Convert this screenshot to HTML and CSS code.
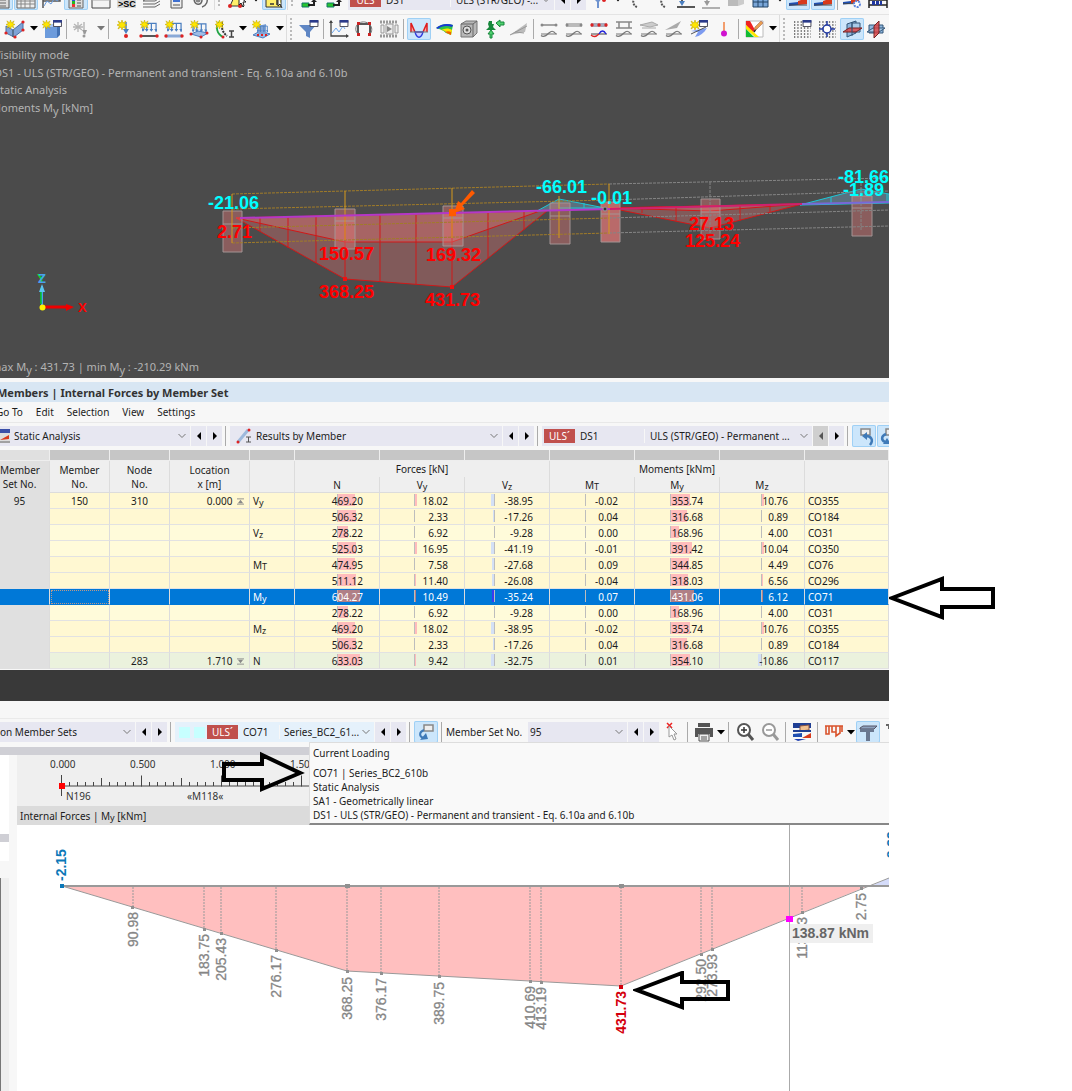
FILE: index.html
```html
<!DOCTYPE html>
<html lang="en">
<head>
<meta charset="utf-8">
<title>Internal Forces by Member Set</title>
<link rel="stylesheet" href="styles.css">
</head>
<body>
<svg class="defs" aria-hidden="true">
  <symbol id="star" viewBox="0 0 10 10"><path d="M5 0 6 3 9 1 7.500 4 10 5 7.500 6 9 9 6 7 5 10 4 7 1 9 2.500 6 0 5 2.500 4 1 1 4 3z" fill="#ffe600" stroke="#c2a800" stroke-width=".6"/></symbol>
  <symbol id="chev" viewBox="0 0 8 6"><path d="M.5 1 4 4.500 7.500 1" fill="none" stroke="#777"/></symbol>
  <symbol id="prev" viewBox="0 0 6 8"><path d="M5 0v8L1 4z"/></symbol>
  <symbol id="next" viewBox="0 0 6 8"><path d="M1 0v8l4-4z"/></symbol>
  <symbol id="down" viewBox="0 0 8 5"><path d="M0 0h8L4 4.500z"/></symbol>
  <symbol id="wave" viewBox="0 0 18 7"><path d="M1 4h16" stroke="#777"/><path d="M1 5.500C4 8 7 5 9 3s4-3 7 1" fill="none" stroke="currentColor" stroke-width="1.200"/></symbol>
  <symbol id="loads" viewBox="0 0 16 12"><path d="M1 9V1h14v9M5 1v8M10 1v8" fill="none" stroke="#4b7fc0" stroke-width="1.300"/><path d="M-1 7h4l-2 3zM3 7h4l-2 3zM8 7h4l-2 3zM13 7h4l-2 3z" fill="#4b7fc0"/></symbol>
  <symbol id="ramp" viewBox="0 0 18 8"><path d="M0 8V5l9-1v3z" fill="#1f4fb0"/><path d="M9 7V3l9-3v6z" fill="#d83a1c"/><path d="M0 7h18" stroke="#444"/></symbol>
  <symbol id="win" viewBox="0 0 10 8"><path d="M.5.5h9v7h-9z" fill="#fff" stroke="#334"/><path d="M0 0h10v3H0z" fill="#2a3a8a"/></symbol>
</svg>

<main class="page">
<section class="app">
  <div class="toolbar cut" role="toolbar" aria-label="Standard">
    <button class="tool on" aria-label="Navigator"><svg viewBox="0 0 24 22"><path d="M4 2h16v18H4z" fill="#ddd" stroke="#555"/><path d="M8 12h9M8 15h9M8 18h9" stroke="#666"/></svg></button>
    <button class="tool on" aria-label="Table"><svg viewBox="0 0 24 22"><path d="M3 2h18v18H3z" fill="#eee" stroke="#666"/><path d="M3 10h18M3 13h18M3 16h18M7 8v12M11 8v12M16 8v12" stroke="#888"/></svg></button>
    <button class="tool" aria-label="Diagram"><svg viewBox="0 0 24 22"><path d="M4 20V10h17v3H4" fill="none" stroke="#555" stroke-width="1.500"/><path d="M5 18l3-5 4 3 3-5 4 2" fill="none" stroke="#6a9de0"/></svg></button>
    <button class="tool on" aria-label="Panel"><svg viewBox="0 0 24 22"><path d="M5 2h14v18H5z" fill="#ddd" stroke="#666"/><path d="M8 10h3v3H8z" fill="#2b4fdc"/><path d="M8 13h3v3H8z" fill="#2b2"/><path d="M8 16h3v3H8z" fill="#e33"/><path d="M13 12h4M13 15h4M13 18h4" stroke="#555"/></svg></button>
    <button class="tool" aria-label="Dialog"><svg viewBox="0 0 24 22"><path d="M3 3h18v17H3z" fill="#f3f3f3" stroke="#444"/><path d="M3 12h18" stroke="#aaa"/></svg></button>
    <button class="tool" aria-label="Script console"><svg viewBox="0 0 24 22"><rect x="3" y="2" width="19" height="18" fill="#d8d8d8"/><text x="4" y="19" class="sc">&gt;SC</text></svg></button>
    <button class="tool" aria-label="Layers"><svg viewBox="0 0 24 22"><path d="M4 13l5-3h12l-5 3zM4 16h12l5-3M4 19h12l5-3" fill="#eee" stroke="#666"/></svg></button>
    <button class="tool" aria-label="Report"><svg viewBox="0 0 24 22"><path d="M7 2h11v18H7z" fill="#eee" stroke="#555"/><path d="M9 11h7v3H9z" fill="#3d6fd0"/><path d="M9 17h7" stroke="#555"/></svg></button>
    <button class="tool" aria-label="Microphone"><svg viewBox="0 0 24 22"><path d="M5 10c0 8 8 8 8 2M10 8v6M17 8c3 5 0 10-4 11" fill="none" stroke="#666" stroke-width="1.500"/><circle cx="9" cy="12" r="2.500" fill="#888"/></svg></button>
    <span class="grip"></span>
    <button class="tool" aria-label="Select"><svg viewBox="0 0 24 22"><path d="M11 5l-6 13h13z" fill="#ffef6a" stroke="#333"/><circle cx="5" cy="18" r="2" fill="#d22"/><circle cx="15" cy="18" r="2" fill="#d22"/><path d="M14 8v9l2-2 2 4 1-1-1-4h3z" fill="#fff" stroke="#222"/></svg></button>
    <button class="drop" aria-label="Select options"><svg><use href="#down"/></svg></button>
    <button class="tool on" aria-label="Numbering"><svg viewBox="0 0 24 22"><path d="M4 3h15v16H4z" fill="#ffef6a" stroke="#333"/><path d="M8 10h4M10 8v4M8 16h4M15 10v7" stroke="#333" stroke-width="1.500"/><path d="M16 8v10l2-2 2 4" fill="#fff" stroke="#222"/></svg></button>
    <span class="grip"></span>
    <button class="tool" aria-label="Load case"><svg viewBox="0 0 24 22"><path d="M4 15h7v4H4z" fill="#28c52e" stroke="#176"/><path d="M10 17h6v-3" fill="none" stroke="#222" stroke-width="2"/><path d="M13 14h6l-3-3z" fill="#222"/><path d="M15 6h6v6h-3z" fill="#f0f"/></svg></button>
    <button class="tool" aria-label="Load combination"><svg viewBox="0 0 24 22"><path d="M4 15h7v4H4z" fill="#28c52e" stroke="#176"/><path d="M10 17h6v-3" fill="none" stroke="#222" stroke-width="2"/><path d="M13 14h6l-3-3z" fill="#222"/><path d="M15 6h6v6h-3z" fill="#f0f"/></svg></button>
    <label class="combo w-top"><b class="badge">ULS</b><span class="code">DS1</span><select aria-label="Design situation"><option>ULS (STR/GEO) -...</option></select><svg class="chev"><use href="#chev"/></svg></label>
    <button class="nav" aria-label="Previous"><svg><use href="#prev"/></svg></button>
    <button class="nav" aria-label="Next"><svg><use href="#next"/></svg></button>
    <button class="tool" aria-label="Filter"><svg viewBox="0 0 24 22"><path d="M5 9h11l-4 5v6h-2v-6z" fill="#6f93cf"/><circle cx="17" cy="12" r="2" fill="#d22"/></svg></button>
    <button class="drop" aria-label="Filter options"><svg><use href="#down"/></svg></button>
    <button class="tool" aria-label="Supports"><svg viewBox="0 0 24 22"><path d="M13 8c-5 3-5 9 0 11" fill="none" stroke="#555" stroke-width="2" stroke-dasharray="2 1"/></svg></button>
    <button class="tool" aria-label="Releases"><svg viewBox="0 0 24 22"><path d="M16 8c-5 3-5 9 0 11" fill="none" stroke="#555" stroke-width="2" stroke-dasharray="2 1"/></svg></button>
    <button class="tool" aria-label="Load values"><svg viewBox="0 0 24 22"><path d="M8 6v8M3 19h18" stroke="#222" stroke-width="1.500"/><path d="M5 13h6l-3 5z" fill="#4b7fc0"/></svg></button>
    <button class="tool" aria-label="Imposed values"><svg viewBox="0 0 24 22"><path d="M8 6v8M3 20h18" stroke="#999" stroke-width="1.500"/><path d="M5 13h6l-3 5z" fill="#999"/></svg></button>
    <button class="tool" aria-label="Solids"><svg viewBox="0 0 24 22"><path d="M4 6h10v12H4z" fill="#bbb"/><path d="M14 6h6v10l-6 2z" fill="#ccc"/></svg></button>
    <button class="tool" aria-label="Mesh"><svg viewBox="0 0 24 22"><path d="M4 3h15v16H4z" fill="#7aa6d8" stroke="#246"/><path d="M4 9h15M4 14h15M9 3v16M14 3v16" stroke="#246"/></svg></button>
    <button class="drop" aria-label="Mesh options"><svg><use href="#down"/></svg></button>
    <button class="tool on" aria-label="Results"><svg viewBox="0 0 24 22"><use href="#ramp" x="3" y="10" width="18" height="8"/></svg></button>
    <button class="tool on" aria-label="Result values"><svg viewBox="0 0 24 22"><use href="#ramp" x="3" y="10" width="18" height="8"/></svg></button>
    <span class="sep"></span>
    <button class="tool" aria-label="Result settings"><svg viewBox="0 0 24 22"><use href="#ramp" x="2" y="9" width="16" height="8"/><circle cx="16" cy="16" r="3" fill="#fff" stroke="#5b83dd" stroke-width="2" stroke-dasharray="2 1"/></svg></button>
    <button class="tool" aria-label="Calculator"><svg viewBox="0 0 24 22"><path d="M3 9v11M21 9v11M3 12h18M3 17h18" stroke="#222" stroke-width="1.500"/><path d="M6 15h10" stroke="#2038a0" stroke-width="4" stroke-dasharray="3 1"/></svg></button>
  </div>

  <div class="toolbar" role="toolbar" aria-label="Results">
    <button class="tool" aria-label="New surface"><svg viewBox="0 0 24 22"><path d="M3 8l7 4 10-8v8l-9 7-8-4z" fill="#7fa3d6" stroke="#4b6fa8"/><path d="M10 12v7" stroke="#345"/><circle cx="3" cy="15" r="1.600" fill="#d22"/><circle cx="12" cy="19" r="1.600" fill="#d22"/><circle cx="20" cy="12" r="1.600" fill="#d22"/><circle cx="20" cy="4" r="1.600" fill="#d22"/><use href="#star" x="3" y="2" width="9" height="9"/></svg></button>
    <button class="drop" aria-label="Surface options"><svg><use href="#down"/></svg></button>
    <button class="tool" aria-label="New solid"><svg viewBox="0 0 24 22"><path d="M5 9l3-3h12l-3 3z" fill="#a9c6ee"/><path d="M5 9h12v11H5z" fill="#6c9bdc"/><path d="M17 9l3-3v11l-3 3z" fill="#4271b4"/><use href="#star" x="2" y="2" width="9" height="9"/><use href="#win" x="13" y="2" width="9" height="7"/></svg></button>
    <span class="sep"></span>
    <button class="tool" aria-label="New nodal load" disabled><svg viewBox="0 0 24 22"><path d="M8 4v10M4 6l8 6M12 6l-8 6M3 9h10" stroke="#b5b5b5" stroke-width="1.300"/><path d="M14 4v12" stroke="#999"/><path d="M12 12h5l-2 5z" fill="#999"/><circle cx="14" cy="18" r="1.500" fill="#999"/></svg></button>
    <button class="drop dim" aria-label="Load options"><svg><use href="#down"/></svg></button>
    <span class="sep"></span>
    <button class="tool" aria-label="Nodal load"><svg viewBox="0 0 24 22"><path d="M14 4v10" stroke="#4b7fc0" stroke-width="1.500"/><path d="M11 11h6l-3 5z" fill="#4b7fc0"/><circle cx="14" cy="18" r="2" fill="#d22"/><use href="#star" x="5" y="2" width="10" height="10"/></svg></button>
    <button class="tool" aria-label="Line load"><svg viewBox="0 0 24 22"><use href="#loads" x="5" y="4" width="15" height="12"/><path d="M4 18h16" stroke="#222" stroke-width="1.500"/><circle cx="4" cy="18" r="1.700" fill="#d22"/><circle cx="20" cy="18" r="1.700" fill="#d22"/><use href="#star" x="3" y="2" width="9" height="9"/></svg></button>
    <button class="tool" aria-label="Member load"><svg viewBox="0 0 24 22"><use href="#loads" x="5" y="4" width="15" height="12"/><path d="M4 18h16" stroke="#8aa9d6" stroke-width="3"/><circle cx="4" cy="18" r="1.700" fill="#d22"/><circle cx="20" cy="18" r="1.700" fill="#d22"/><use href="#star" x="3" y="2" width="9" height="9"/></svg></button>
    <button class="tool" aria-label="Surface load"><svg viewBox="0 0 24 22"><path d="M4 16l7-3 10 2-7 4z" fill="#9dbce6" stroke="#4b7fc0"/><use href="#loads" x="5" y="5" width="15" height="11"/><circle cx="4" cy="16" r="1.500" fill="#d22"/><circle cx="14" cy="19" r="1.500" fill="#d22"/><circle cx="20" cy="15" r="1.500" fill="#d22"/><use href="#star" x="3" y="2" width="9" height="9"/></svg></button>
    <button class="tool" aria-label="Imperfection"><svg viewBox="0 0 24 22"><path d="M7 4c-4 5-2 12 4 15" fill="none" stroke="#22a545" stroke-width="1.800"/><path d="M10 4c-1 6 1 11 5 14" fill="none" stroke="#333" stroke-width="2" stroke-dasharray="2 1"/><path d="M17 13h5M19.500 13v6M17 19h5" stroke="#444" stroke-width="1.500"/><circle cx="11" cy="19" r="1.500" fill="#d22"/><use href="#star" x="3" y="2" width="9" height="9"/></svg></button>
    <button class="drop" aria-label="Imperfection options"><svg><use href="#down"/></svg></button>
    <button class="tool" aria-label="Free load"><svg viewBox="0 0 24 22"><path d="M4 17l7-4 10 3-7 4z" fill="#9dbce6" stroke="#4b7fc0"/><path d="M9 16V8l8-2v10z" fill="#7fa3d6"/><use href="#loads" x="8" y="6" width="11" height="11"/><path d="M8 17h10" stroke="#d22" stroke-width="2" stroke-dasharray="2 2"/><use href="#star" x="3" y="2" width="9" height="9"/></svg></button>
    <button class="drop" aria-label="Free load options"><svg><use href="#down"/></svg></button>
    <span class="grip"></span>
    <button class="tool" aria-label="Result filter"><svg viewBox="0 0 24 22"><path d="M2 7h17l-6 7v6l-4-2v-4z" fill="#5f86c4"/><use href="#win" x="12" y="2" width="10" height="7"/></svg></button>
    <span class="sep"></span>
    <button class="tool" aria-label="Result diagrams"><svg viewBox="0 0 24 22"><path d="M4 3v15h17" fill="none" stroke="#444" stroke-width="1.300"/><path d="M2 5l2-3 2 3zM19 16l3 2-3 2z" fill="#444"/><path d="M5 15l4-5 3 4 4-6 2 3" fill="none" stroke="#6aa5ee"/><use href="#win" x="12" y="2" width="10" height="7"/></svg></button>
    <button class="tool" aria-label="Deformation"><svg viewBox="0 0 24 22"><path d="M6 17V6h12v11" fill="none" stroke="#222" stroke-width="1.500"/><path d="M6 16C2 12 4 7 7 5c4-2 8-1 10 1 4 3 3 8 1 10" fill="none" stroke="#777"/><path d="M5 4h3v3H5zM16 4h3v3h-3zM5 15h3v3H5zM16 15h3v3h-3z" fill="#c22"/></svg></button>
    <button class="tool" aria-label="Animation"><svg viewBox="0 0 24 22"><path d="M3 4h18M3 18h18" stroke="#999" stroke-width="3" stroke-dasharray="2 1"/><path d="M4 7h3v8H4zM9 6h7v10H9zM18 7h3v8h-3z" fill="#eee" stroke="#999"/><path d="M10 8l5 3-5 3z" fill="#888"/></svg></button>
    <span class="sep"></span>
    <button class="tool on" aria-label="Internal forces"><svg viewBox="0 0 24 22"><path d="M4 14V5l4 9M20 14V5l-4 9" fill="#f7aaaa" stroke="#e01c1c" stroke-width="1.500"/><path d="M8 14c2 7 6 7 8 0z" fill="#c8ccff" stroke="#2c38dd" stroke-width="1.300"/><path d="M3 14h18" stroke="#777"/></svg></button>
    <button class="tool" aria-label="Surface results"><svg viewBox="0 0 24 22"><path d="M4 10c5-4 11-5 17-3l-2 10-5-2c-3-3-7-4-10-5z" fill="#2ec24a"/><path d="M4 10c5-4 11-5 17-3l-1 2C15 7 9 8 6 11z" fill="#1836d8"/><path d="M9 12c4-2 8-2 11 0l-1 5-4-2c-2-2-3-3-6-3z" fill="#ffe200"/><path d="M13 14c2-1 4-1 6 0v3z" fill="#f06000"/></svg></button>
    <button class="tool" aria-label="Solid results"><svg viewBox="0 0 24 22"><path d="M4 6l5-3h11v12l-4 4H4z" fill="#b8b8b8" stroke="#777"/><path d="M4 6h12v13M16 6l4-3" fill="none" stroke="#666"/><circle cx="10" cy="12" r="4" fill="#ddd" stroke="#555"/><circle cx="10" cy="12" r="1.500" fill="#555"/></svg></button>
    <button class="tool" aria-label="Reactions"><svg viewBox="0 0 24 22"><path d="M7 3h3v3h2l-1 3 3 3H4l3-3-1-3z" fill="#17883c"/><path d="M14 5l4-3v2h4v3h-4v2zM8 20v-4H6l3-4 3 4h-2v4z" fill="#4fd06e" stroke="#17883c"/></svg></button>
    <button class="tool" aria-label="Sections"><svg viewBox="0 0 24 22"><path d="M3 17L20 5l-2 9z" fill="#bbb"/><path d="M3 17l17-9M8 14l9 1" stroke="#999"/></svg></button>
    <span class="sep"></span>
    <button class="tool" aria-label="Line results"><svg viewBox="0 0 24 22"><path d="M4 7h16" stroke="#888" stroke-width="1.500"/><circle cx="5" cy="7" r="1.500" fill="#888"/><circle cx="19" cy="7" r="1.500" fill="#888"/><use href="#wave" x="3" y="12" width="18" height="7" color="#777"/></svg></button>
    <button class="tool" aria-label="Member results"><svg viewBox="0 0 24 22"><path d="M4 7h16" stroke="#bbb" stroke-width="4"/><circle cx="5" cy="7" r="1.500" fill="#888"/><circle cx="19" cy="7" r="1.500" fill="#888"/><use href="#wave" x="3" y="12" width="18" height="7" color="#777"/></svg></button>
    <button class="tool" aria-label="Member set results"><svg viewBox="0 0 24 22"><path d="M4 7h16" stroke="#aab" stroke-width="4"/><circle cx="5" cy="7" r="1.700" fill="#d22"/><circle cx="12" cy="7" r="1.700" fill="#d22"/><circle cx="19" cy="7" r="1.700" fill="#d22"/><path d="M4 16h16" stroke="#444"/><path d="M4 17c3 3 6 1 8-1" fill="none" stroke="#d22" stroke-width="1.300"/><path d="M12 16c2-4 5-4 7 0" fill="none" stroke="#22d" stroke-width="1.300"/></svg></button>
    <button class="tool" aria-label="Support results"><svg viewBox="0 0 24 22"><path d="M4 4h16M7 4v6h3M17 4v6h-3M4 10h16" stroke="#888" fill="none" stroke-width="1.500"/><use href="#wave" x="3" y="12" width="18" height="7" color="#777"/></svg></button>
    <button class="tool" aria-label="Surface section"><svg viewBox="0 0 24 22"><path d="M3 7l12-3 6 3-8 2zM5 10h14" stroke="#aaa" fill="#ccc"/><use href="#wave" x="3" y="12" width="18" height="7" color="#777"/></svg></button>
    <button class="tool" aria-label="Inclined section"><svg viewBox="0 0 24 22"><path d="M3 12L19 3l-4 7z" fill="#aaa"/><use href="#wave" x="3" y="12" width="18" height="7" color="#777"/></svg></button>
    <button class="tool" aria-label="New result section"><svg viewBox="0 0 24 22"><path d="M4 13l16-3c-3 5-7 8-12 9l3-5z" fill="#7d9bf0"/><path d="M4 16l15-7" stroke="#555"/><use href="#star" x="3" y="2" width="10" height="10"/><use href="#win" x="12" y="2" width="9" height="7"/></svg></button>
    <button class="tool" aria-label="Probe"><svg viewBox="0 0 24 22"><path d="M12 4v12" stroke="#f08040" stroke-width="1.500"/><circle cx="12" cy="15.500" r="3" fill="#d013d0"/></svg></button>
    <span class="sep"></span>
    <button class="tool" aria-label="Colour scale"><svg viewBox="0 0 24 22"><path d="M4 3h17v16H4z" fill="#fff" stroke="#bbb"/><path d="M4 3h4l5 9-3 3-6-8z" fill="#e22"/><path d="M4 7l13 12h-4L4 11z" fill="#ffe600"/><path d="M4 11l8 8H4z" fill="#1b3"/><path d="M12 14l3-5" stroke="#222" stroke-width="1.500"/><path d="M19 3l2 2-6 6-3 1 1-3z" fill="#e9a050" stroke="#a65" stroke-width=".6"/></svg></button>
    <button class="drop" aria-label="Colour options"><svg><use href="#down"/></svg></button>
    <span class="grip"></span>
    <button class="tool" aria-label="Grid settings"><svg viewBox="0 0 24 22"><path d="M4 4h17M4 7h17M4 10h17M4 13h17M4 16h17M4 19h17" stroke="#555" stroke-width="1.300" stroke-dasharray="1.300 2"/><use href="#win" x="12" y="2" width="10" height="7"/></svg></button>
    <button class="tool" aria-label="Snap"><svg viewBox="0 0 24 22"><path d="M4 4h17M4 7h17M4 10h17M4 13h17M4 16h17M4 19h17" stroke="#555" stroke-width="1.300" stroke-dasharray="1.300 2"/><circle cx="12" cy="11" r="4" fill="#fff" stroke="#2038a0" stroke-width="1.500"/><path d="M12 3v4M12 15v4M4 11h4M16 11h4" stroke="#2038a0" stroke-width="1.500"/></svg></button>
    <button class="tool on" aria-label="Work plane XY"><svg viewBox="0 0 24 22"><path d="M7 6l9-3v12l-9 4z" fill="#8fb8df" stroke="#357"/><path d="M12 5h8v9h-8z" fill="#a9cbe9" stroke="#357"/><path d="M3 14l6-4h13l-6 4z" fill="#e04040" fill-opacity=".8" stroke="#722"/><path d="M12 4v14" stroke="#357"/></svg></button>
    <button class="tool" aria-label="Work plane YZ"><svg viewBox="0 0 24 22"><path d="M4 7h14v8H4z" fill="#8fb8df" stroke="#357"/><path d="M2 14l6-4h12l-6 4z" fill="#a9cbe9" stroke="#357"/><path d="M9 8l5-5v12l-5 5z" fill="#e04040" fill-opacity=".8" stroke="#722"/></svg></button>
  </div>

  <svg class="viewport" role="img" aria-label="Moments My on the structure">
    <g transform="translate(0 -42)">
      <g class="info">
        <text x="-6" y="59">Visibility mode</text>
        <text x="-6" y="77">DS1 - ULS (STR/GEO) - Permanent and transient - Eq. 6.10a and 6.10b</text>
        <text x="-6" y="94">Static Analysis</text>
        <text x="-9" y="112">Moments M<tspan dy="3">y</tspan><tspan dy="-3"> [kNm]</tspan></text>
        <text x="-9" y="371">max M<tspan dy="3">y</tspan><tspan dy="-3"> : 431.73 | min M</tspan><tspan dy="3">y</tspan><tspan dy="-3"> : -210.29 kNm</tspan></text>
      </g>
      <path class="mom" d="M236 218L345 279 452 287 547 211z"/>
      <path class="mom" d="M236 218L345 242H452L540 211z"/>
      <path class="mom" d="M610 208L710 228 802 204z"/>
      <path class="mom" d="M610 208L710 211 802 204z"/>
      <path class="neg" d="M537 211L559 199 605 208 559 210z"/>
      <path class="neg" d="M800 205L861 189 889 194V203z"/>
      <path class="redline" d="M260 218V231M288 217V248M316 217V263M345 216V279M380 215V281M416 215V284M452 214V287M488 213V258M524 212V230M642 208V213M676 208V221M740 206V221M770 205V212"/>
      <path class="cyanline" d="M559 199V208H605M584 203V208M831 197V204M861 189V203M887 194V202"/>
      <g class="pier">
        <path d="M223 211h19v41h-19zM223 224h19"/><path d="M335 209h20v40h-20zM335 221h20"/><path d="M443 206h20v40h-20zM443 218h20"/><path d="M550 203h20v41h-20zM550 216h20"/><path class="full" d="M601 202h19v40h-19zM601 214h19"/><path d="M701 199h19v40h-19zM701 212h19"/><path d="M852 196h20v40h-20zM852 208h20"/>
      </g>
      <path class="gridline" d="M609 184L889 178M609 200L889 191M609 218L889 210M609 233L889 226M710 182V236M861 183V231"/>
      <path class="gridline gold" d="M232 194L609 184M232 209L609 200M232 228L609 218M232 243L609 233"/>
      <path class="goldline" d="M232 194V243M345 191V240M452 188V238M559 196V238M609 184V234"/>
      <path d="M240 218L610 209" stroke="#b338c8" stroke-width="2"/><path d="M610 209L802 204" stroke="#d0206e" stroke-width="2"/><path d="M802 204L889 202" stroke="#7868d8" stroke-width="2"/>
      <path d="M472 190l3 3-13 13 3 3-11 4 4-12 3 2z" fill="#ff5a00"/><path d="M449 209h7v7h-7z" fill="#ff5a00"/>
      <path d="M343 277h4v4h-4zM450 285h4v4h-4z" fill="#f01010"/>
      <circle cx="605" cy="209" r="2" fill="#333" stroke="#999"/>
      <g class="force pos"><text x="217" y="238">2.71</text><text x="319" y="260">150.57</text><text x="319" y="298">368.25</text><text x="426" y="261">169.32</text><text x="425" y="306">431.73</text><text x="689" y="230">27.13</text><text x="685" y="247">125.24</text></g>
      <g class="force negative"><text x="208" y="209">-21.06</text><text x="536" y="193">-66.01</text><text x="591" y="204">-0.01</text><text x="838" y="183">-81.66</text><text x="843" y="196">-1.89</text></g>
      <path d="M42 306V286" stroke="#4a9ff0" stroke-width="2"/><path d="M41 304V288" stroke="#0c3" stroke-width="1.500"/><path d="M39 292l3-8 3 8z" fill="#5cc4f0"/>
      <path d="M43 307h26" stroke="#e00" stroke-width="3"/><path d="M66 304l8 3-8 4z" fill="#e00"/><circle cx="42.500" cy="307.500" r="3" fill="#fff200"/>
      <g class="axis"><text x="37" y="283" fill="#00e020">Y</text><text x="38" y="283" fill="#4a9ff0">Z</text><text x="78" y="312" fill="#f00">X</text></g>
    </g>
  </svg>

  <h1 class="title">Members | Internal Forces by Member Set</h1>
  <nav class="menu"><a href="#">Go To</a><a href="#">Edit</a><a href="#">Selection</a><a href="#">View</a><a href="#">Settings</a></nav>
  <div class="bar">
    <label class="combo w-analysis"><svg class="ico half" viewBox="0 0 10 14"><path d="M0 0h10v14H0z" fill="#ddd"/><path d="M0 0h10v4H0z" fill="#3a4fa8"/><path d="M0 11l9-5v4z" fill="#d83a1c"/><path d="M0 13h10" stroke="#666"/></svg><select aria-label="Analysis"><option>Static Analysis</option></select><svg class="chev"><use href="#chev"/></svg></label>
    <button class="nav" aria-label="Previous analysis"><svg><use href="#prev"/></svg></button>
    <button class="nav" aria-label="Next analysis"><svg><use href="#next"/></svg></button>
    <span class="sep"></span>
    <label class="combo w-results"><svg class="ico" viewBox="0 0 16 16"><path d="M2 14L12 2" stroke="#9db9dc" stroke-width="3"/><circle cx="2" cy="14" r="1.500" fill="#d22"/><circle cx="13" cy="2" r="1.500" fill="#d22"/><path d="M10 9h5M12.500 9v5M10 14h5" stroke="#555"/></svg><select aria-label="Results"><option>Results by Member</option></select><svg class="chev"><use href="#chev"/></svg></label>
    <button class="nav" aria-label="Previous result"><svg><use href="#prev"/></svg></button>
    <button class="nav" aria-label="Next result"><svg><use href="#next"/></svg></button>
    <span class="sep"></span>
    <label class="combo w-situation"><b class="badge">ULS´</b><span class="code">DS1</span><select aria-label="Situation"><option>ULS (STR/GEO) - Permanent ...</option></select><svg class="chev"><use href="#chev"/></svg></label>
    <button class="nav off" aria-label="Previous situation"><svg><use href="#prev"/></svg></button>
    <button class="nav" aria-label="Next situation"><svg><use href="#next"/></svg></button>
    <span class="sep"></span>
    <button class="tool on" aria-label="Sync from selection"><svg viewBox="0 0 24 22"><path d="M9 4h9v6H9z" fill="#eee" stroke="#888" stroke-width="1.500"/><path d="M18 20c4-5 1-9-4-9" fill="none" stroke="#3f7ab8" stroke-width="2.500"/><path d="M15 7v8l-5-4z" fill="#3f7ab8"/></svg></button>
    <button class="tool on" aria-label="Sync to selection"><svg viewBox="0 0 24 22"><path d="M9 4h9v6H9z" fill="#eee" stroke="#888" stroke-width="1.500"/><path d="M9 9c-5 2-5 6-1 8" fill="none" stroke="#3f7ab8" stroke-width="2.500"/><path d="M6 19h8l-4-6z" fill="#3f7ab8"/></svg></button>
  </div>

  <table class="forces">
    <colgroup><col class="k1"><col class="k2"><col class="k2"><col class="k3"><col class="k4"><col class="kv"><col class="kv"><col class="kv"><col class="kv"><col class="kv"><col class="kv"><col></colgroup>
    <thead>
      <tr class="strip"><td></td><td></td><td></td><td></td><td></td><td></td><td></td><td></td><td></td><td></td><td></td><td></td></tr>
      <tr><th rowspan="2" class="rowhead">Member<br>Set No.</th><th rowspan="2">Member<br>No.</th><th rowspan="2">Node<br>No.</th><th rowspan="2">Location<br>x [m]</th><th rowspan="2"></th><th colspan="3">Forces [kN]</th><th colspan="3">Moments [kNm]</th><th rowspan="2"></th></tr>
      <tr><th>N</th><th>V<sub>y</sub></th><th>V<sub>z</sub></th><th>M<sub>T</sub></th><th>M<sub>y</sub></th><th>M<sub>z</sub></th></tr>
    </thead>
    <tbody>
      <tr><th class="rowhead">95</th><td class="c">150</td><td class="c">310</td><td class="loc">0.000 <svg viewBox="0 0 8 8"><path d="M0 1h8M0 7h8"/><path d="M4 2l3 4H1z"/></svg></td><td>V<sub>y</sub></td><td class="v n" style="--w:18px">469.20</td><td class="v vy" style="--w:3px">18.02</td><td class="v vz" style="--w:3px">-38.95</td><td class="v mt">-0.02</td><td class="v my" style="--w:20px">353.74</td><td class="v mz" style="--w:3px">10.76</td><td>CO355</td></tr>
      <tr><th class="rowhead"></th><td></td><td></td><td></td><td></td><td class="v n" style="--w:19px">506.32</td><td class="v vy">2.33</td><td class="v vz" style="--w:1px">-17.26</td><td class="v mt">0.04</td><td class="v my" style="--w:17px">316.68</td><td class="v mz">0.89</td><td>CO184</td></tr>
      <tr class="alt"><th class="rowhead"></th><td></td><td></td><td></td><td>V<sub>z</sub></td><td class="v n" style="--w:11px">278.22</td><td class="v vy" style="--w:1px">6.92</td><td class="v vz">-9.28</td><td class="v mt">0.00</td><td class="v my" style="--w:9px">168.96</td><td class="v mz" style="--w:1px">4.00</td><td>CO31</td></tr>
      <tr class="alt"><th class="rowhead"></th><td></td><td></td><td></td><td></td><td class="v n" style="--w:19px">525.03</td><td class="v vy" style="--w:3px">16.95</td><td class="v vz" style="--w:3px">-41.19</td><td class="v mt">-0.01</td><td class="v my" style="--w:22px">391.42</td><td class="v mz" style="--w:3px">10.04</td><td>CO350</td></tr>
      <tr><th class="rowhead"></th><td></td><td></td><td></td><td>M<sub>T</sub></td><td class="v n" style="--w:18px">474.95</td><td class="v vy" style="--w:1px">7.58</td><td class="v vz" style="--w:2px">-27.68</td><td class="v mt">0.09</td><td class="v my" style="--w:19px">344.85</td><td class="v mz" style="--w:1px">4.49</td><td>CO76</td></tr>
      <tr><th class="rowhead"></th><td></td><td></td><td></td><td></td><td class="v n" style="--w:19px">511.12</td><td class="v vy" style="--w:2px">11.40</td><td class="v vz" style="--w:2px">-26.08</td><td class="v mt">-0.04</td><td class="v my" style="--w:18px">318.03</td><td class="v mz" style="--w:2px">6.56</td><td>CO296</td></tr>
      <tr class="sel"><th class="rowhead"></th><td class="focus"></td><td></td><td></td><td>M<sub>y</sub></td><td class="v n" style="--w:23px">604.27</td><td class="v vy" style="--w:2px">10.49</td><td class="v vz" style="--w:2px">-35.24</td><td class="v mt">0.07</td><td class="v my" style="--w:24px">431.06</td><td class="v mz" style="--w:2px">6.12</td><td>CO71</td></tr>
      <tr class="alt"><th class="rowhead"></th><td></td><td></td><td></td><td></td><td class="v n" style="--w:11px">278.22</td><td class="v vy" style="--w:1px">6.92</td><td class="v vz">-9.28</td><td class="v mt">0.00</td><td class="v my" style="--w:9px">168.96</td><td class="v mz" style="--w:1px">4.00</td><td>CO31</td></tr>
      <tr><th class="rowhead"></th><td></td><td></td><td></td><td>M<sub>z</sub></td><td class="v n" style="--w:18px">469.20</td><td class="v vy" style="--w:3px">18.02</td><td class="v vz" style="--w:3px">-38.95</td><td class="v mt">-0.02</td><td class="v my" style="--w:20px">353.74</td><td class="v mz" style="--w:3px">10.76</td><td>CO355</td></tr>
      <tr><th class="rowhead"></th><td></td><td></td><td></td><td></td><td class="v n" style="--w:19px">506.32</td><td class="v vy">2.33</td><td class="v vz" style="--w:1px">-17.26</td><td class="v mt">0.04</td><td class="v my" style="--w:17px">316.68</td><td class="v mz">0.89</td><td>CO184</td></tr>
      <tr class="green"><th class="rowhead"></th><td></td><td class="c">283</td><td class="loc">1.710 <svg viewBox="0 0 8 8"><path d="M0 1h8M0 7h8"/><path d="M4 6l3-4H1z"/></svg></td><td>N</td><td class="v n" style="--w:23px">633.03</td><td class="v vy" style="--w:2px">9.42</td><td class="v vz" style="--w:3px">-32.75</td><td class="v mt">0.01</td><td class="v my" style="--w:20px">354.10</td><td class="v mz left" style="--w:3px">-10.86</td><td>CO117</td></tr>
    </tbody>
  </table>
  <svg class="pointer to-row" viewBox="0 0 106 44"><path d="M3 22L53 3v10h51v18H53v10z"/></svg>
</section>

<section class="detail">
  <div class="bar">
    <label class="combo w-sets"><select aria-label="Results on"><option>on Member Sets</option></select><svg class="chev"><use href="#chev"/></svg></label>
    <button class="nav" aria-label="Previous object"><svg><use href="#prev"/></svg></button>
    <button class="nav" aria-label="Next object"><svg><use href="#next"/></svg></button>
    <span class="sep"></span>
    <label class="combo hot w-loading"><i class="chip"></i><i class="chip"></i><b class="badge">ULS´</b><span class="code">CO71</span><select aria-label="Loading"><option>Series_BC2_61...</option></select><svg class="chev"><use href="#chev"/></svg></label>
    <button class="nav" aria-label="Previous loading"><svg><use href="#prev"/></svg></button>
    <button class="nav" aria-label="Next loading"><svg><use href="#next"/></svg></button>
    <span class="sep"></span>
    <button class="tool on" aria-label="Sync loading"><svg viewBox="0 0 24 22"><path d="M10 4h9v6h-9z" fill="#eee" stroke="#888" stroke-width="1.500"/><path d="M10 9c-5 2-5 6-1 8" fill="none" stroke="#3f7ab8" stroke-width="2"/><path d="M6 19l8-1-2-6z" fill="#3f7ab8"/></svg></button>
    <span class="sep"></span>
    <label class="caption" for="setno">Member Set No.</label>
    <span class="combo w-no"><select id="setno"><option>95</option></select><svg class="chev"><use href="#chev"/></svg></span>
    <button class="nav" aria-label="Previous set"><svg><use href="#prev"/></svg></button>
    <button class="nav" aria-label="Next set"><svg><use href="#next"/></svg></button>
    <button class="tool" aria-label="Pick set"><svg viewBox="0 0 24 22"><path d="M7 2l5 5M12 2L7 7" stroke="#e22" stroke-width="1.500"/><path d="M9 5v11l3-2 2 5 2-1-2-5h3z" fill="#fff" stroke="#999"/></svg></button>
    <span class="sep"></span>
    <button class="tool" aria-label="Print"><svg viewBox="0 0 24 22"><path d="M6 2h12v4H6zM3 7h18v9h-3v-3H6v3H3z" fill="#555"/><path d="M7 13h10v7H7z" fill="#eee" stroke="#555"/><path d="M9 16h6M9 18h6" stroke="#555"/></svg></button>
    <button class="drop" aria-label="Print options"><svg><use href="#down"/></svg></button>
    <span class="sep"></span>
    <button class="tool" aria-label="Zoom in"><svg viewBox="0 0 24 22"><circle cx="11" cy="9" r="6" fill="#fff" stroke="#555" stroke-width="2"/><path d="M15 13l5 6" stroke="#555" stroke-width="3"/><path d="M8 9h6M11 6v6" stroke="#333" stroke-width="1.500"/></svg></button>
    <button class="tool" aria-label="Zoom out"><svg viewBox="0 0 24 22"><circle cx="11" cy="9" r="6" fill="#fff" stroke="#999" stroke-width="2"/><path d="M15 13l5 6" stroke="#999" stroke-width="3"/><path d="M8 9h6" stroke="#999" stroke-width="1.500"/></svg></button>
    <span class="sep"></span>
    <button class="tool" aria-label="Result navigator"><svg viewBox="0 0 24 22"><path d="M3 2h18v5H3z" fill="#1f3f94"/><path d="M10 5l9-1v5l-9 1z" fill="#f0c090" stroke="#854"/><path d="M3 10h18" stroke="#1f3f94" stroke-width="2"/><path d="M3 13l9-1v4H3z" fill="#1f4fb0"/><path d="M12 17l9-5v5z" fill="#d83a1c"/><path d="M4 18h12l-8 2z" fill="#1f3fb0"/></svg></button>
    <span class="sep"></span>
    <button class="tool" aria-label="Diagram display"><svg viewBox="0 0 24 22"><path d="M3 5h18M4 5v8h3V5M10 5v6h4V5M14 5v10l4-3V5M20 5v6" fill="none" stroke="#d9532c" stroke-width="1.600"/></svg></button>
    <button class="drop" aria-label="Diagram options"><svg><use href="#down"/></svg></button>
    <button class="tool on" aria-label="Section"><svg viewBox="0 0 24 22"><path d="M4 7l3-2h14l-3 3H4z" fill="#8ea2be" stroke="#556"/><path d="M4 8h14v3h-4v9h-4v-9H4z" fill="#6a7890"/></svg></button>
    <button class="tool" aria-label="More"><svg viewBox="0 0 24 22"><path d="M5 4h14M8 4v4" stroke="#666" stroke-width="2"/></svg></button>
  </div>
  <div class="workspace">
    <aside class="side"><div class="blank tall"></div><div class="rule"></div><div class="blank"></div><div class="rest"></div></aside>
    <div class="diagram">
      <svg class="ruler" role="img" aria-label="Position along the member set">
        <g transform="translate(-17 -755)">
          <path d="M61 786H889" stroke="#444"/>
          <path class="minor" d="M62 784H889"/><path class="mid" d="M61 782H889"/><path class="major" d="M61 781H889"/>
          <path d="M61.500 775v21" stroke="#444"/><path d="M59 783h6v6h-6z" fill="#f00"/>
          <text x="50" y="768">0.000</text><text x="130" y="768">0.500</text><text x="210" y="768">1.000</text><text x="290" y="768">1.500</text>
          <text x="66" y="800">N196</text><text x="187" y="800">«M118«</text>
        </g>
      </svg>
      <h2 class="heading">Internal Forces | M<sub>y</sub> [kNm]</h2>
      <svg class="chart" role="img" aria-label="Internal force My along the member set">
        <g transform="translate(-17 -825)">
          <path d="M62 886L347 971 621 986 863 888 869 886z" fill="#ffbfbf"/>
          <path d="M871 886l18-8v8z" fill="#d5dcfa"/>
          <path d="M62 886L347 971 621 986 889 878" fill="none" stroke="#999"/>
          <path d="M62 886H889" stroke="#999" stroke-width="2"/>
          <path class="drops" d="M133 887V907M204 887V929M221 887V934M276 887V950M347 887V971M381 887V974M439 887V977M530 887V981M541 887V982M621 887V986M701 887V954M712 887V950M802 887V913"/>
          <path fill="#909090" d="M131 906h3v3h-3zM203 928h3v3h-3zM220 932h3v3h-3zM275 949h3v3h-3zM346 970h3v3h-3zM380 972h3v3h-3zM438 975h3v3h-3zM529 980h3v3h-3zM540 981h3v3h-3zM700 953h3v3h-3zM711 948h3v3h-3zM801 911h3v3h-3zM860 887h3v3h-3zM345 884h5v4h-5zM619 884h5v4h-5z"/>
          <path d="M60 884h4v4h-4z" fill="#0b78b8"/><path d="M619 985h4v4h-4z" fill="#d4000c"/>
          <path d="M789.500 825V1200" stroke="#aaa"/>
          <g class="values" text-anchor="end">
            <text transform="translate(138 912) rotate(-90)">90.98</text><text transform="translate(209 934) rotate(-90)">183.75</text><text transform="translate(226 938) rotate(-90)">205.43</text><text transform="translate(281 955) rotate(-90)">276.17</text><text transform="translate(352 977) rotate(-90)">368.25</text><text transform="translate(386 978) rotate(-90)">376.17</text><text transform="translate(444 982) rotate(-90)">389.75</text><text transform="translate(535 986) rotate(-90)">410.69</text><text transform="translate(546 987) rotate(-90)">413.19</text><text transform="translate(706 959) rotate(-90)">292.50</text><text transform="translate(717 954) rotate(-90)">273.93</text><text transform="translate(807 917) rotate(-90)">113.93</text><text transform="translate(866 893) rotate(-90)">2.75</text>
            <text class="max" transform="translate(626 991) rotate(-90)">431.73</text>
          </g>
          <text class="min" transform="translate(66 881) rotate(-90)">-2.15</text>
          <text class="min" transform="translate(897 863) rotate(-90)">-8.29</text>
          <path d="M790 924h83v19h-83z" fill="#efefef"/><path d="M786 916h7v6h-7z" fill="#f0f"/>
          <text class="probe" x="792" y="938">138.87 kNm</text>
        </g>
      </svg>
    </div>
  </div>
  <div class="tip" role="tooltip"><p class="lead">Current Loading</p><p>CO71 | Series_BC2_610b</p><p>Static Analysis</p><p>SA1 - Geometrically linear</p><p>DS1 - ULS (STR/GEO) - Permanent and transient - Eq. 6.10a and 6.10b</p></div>
  <svg class="pointer to-tip" viewBox="0 0 84 42"><path d="M3 13h38V4l38 18-38 16v-9H3z"/></svg>
  <svg class="pointer to-max" viewBox="0 0 98 40"><path d="M4 19l45-17v9h46v17H49v8z"/></svg>
</section>
</main>
</body>
</html>
```
FILE: styles.css
```css
* { box-sizing: border-box; }
body {
  margin: 0;
  background: #fff;
  color: #1c1c1c;
  font: 10px/14px "Noto Sans", "Open Sans", sans-serif;
}
.defs { position: absolute; width: 0; height: 0; }
.page { padding-right: 183px; display: flex; flex-direction: column; min-height: 100vh; }
.app { position: relative; padding-bottom: 1px; border-bottom: 31px solid #393939; background: #f7f7f7; }

button, select { font: inherit; color: inherit; border: 0; padding: 0; margin: 0; background: none; }
svg { display: block; fill: #000; }

/* toolbars */
.toolbar {
  display: flex; align-items: center; gap: 1px;
  height: 27px; padding-left: 3px;
  overflow: hidden; background: #f7f7f7;
}
.toolbar.cut { height: 15px; align-items: flex-end; padding: 0 0 4px; border-bottom: 1px solid #e4e4e4; }
.toolbar.cut > :first-child { margin-left: -11px; }
.tool { flex: none; width: 24px; height: 22px; border-radius: 2px; }
.tool svg { width: 24px; height: 22px; }
.tool.on { background: #cce6fb; box-shadow: inset 0 0 0 1px #9fd0f5; }
.sc { font: bold 9px "Liberation Sans", sans-serif; }
.drop { flex: none; width: 11px; height: 22px; display: flex; align-items: center; justify-content: center; }
.drop svg { width: 8px; height: 5px; }
.drop.dim svg { fill: #777; }
.sep { flex: none; width: 4px; height: 20px; border-left: 1px solid #aaa; margin-left: 1px; margin-right: -1px; }
.grip { flex: none; width: 10px; height: 30px; border-left: 1px solid #ddd; }
.grip::after { content: ""; display: block; height: 22px; margin: 4px 0 0 3px; border-left: 2px dotted #bbb; }

.bar { display: flex; align-items: center; gap: 1px; overflow: hidden; }
.bar .sep { width: 6px; border-left: 1px solid #aaa; margin-left: 2px; margin-right: -2px; }
.bar .drop { width: 8px; }
.combo { flex: none; display: flex; align-items: center; height: 20px; background: #e7e7f1; padding: 0 4px 0 2px; }
.combo select { flex: 1; min-width: 0; appearance: none; height: 20px; line-height: 20px; }
.combo .chev { flex: none; width: 8px; height: 6px; }
.combo.hot { background: #e5f1fb; }
.nav { flex: none; width: 15px; height: 20px; background: #e7e7f1; display: flex; align-items: center; justify-content: center; }
.nav svg { width: 6px; height: 8px; }
.nav.off { background: #cfcfcf; }
.nav.off svg { fill: #555; }
.badge { flex: none; width: 31px; height: 14px; line-height: 14px; background: #c0504d; color: #fff; font-weight: 400; text-align: center; }
.code { flex: none; padding-left: 5px; width: 70px; border-right: 1px solid #f7f7f7; margin-right: 5px; }
.hot .code { width: 42px; margin-right: 4px; }
.chip { flex: none; width: 11px; height: 11px; background: #c7ffff; margin: 0 2px; }
.ico { width: 16px; height: 16px; margin: 0 4px; }
.ico.half { width: 10px; height: 14px; margin: 0 4px 0 -2px; }
.w-top { width: 206px; }
.w-analysis { width: 190px; }
.w-results { width: 272px; }
.w-situation { width: 270px; }
.w-sets { width: 135px; padding-left: 0; }
.w-loading { width: 199px; }
.w-no { width: 99px; }
.caption { flex: none; width: 81px; white-space: nowrap; }

/* 3D view */
.viewport { width: 100%; height: 336px; background: #4b4b4b; overflow: hidden; }
.info { font-size: 11px; fill: #b4b4b4; }
.mom { fill: #ff7d7d; fill-opacity: .3; stroke: #d01818; }
.neg { fill: #7ab8e0; fill-opacity: .35; stroke: #1cc8d8; }
.redline { stroke: #d01818; fill: none; }
.cyanline { stroke: #1cc8d8; fill: none; }
.pier path { fill: #e87878; fill-opacity: .4; stroke: #a39494; }
.pier .full { fill-opacity: .7; }
.gridline { fill: none; stroke: #858585; stroke-dasharray: 3 1; }
.gridline.gold { stroke: #a17c28; }
.goldline { fill: none; stroke: #d79a1c; stroke-width: 1; }
.force { font: bold 18px "Liberation Sans", Arial, sans-serif; }
.force.pos { fill: #f00; }
.force.negative { fill: #0ff; }
.axis { font: bold 13px "Liberation Sans", Arial, sans-serif; }

/* table panel */
.title { margin: 0 0 0 -3px; height: 24px; border-top: 4px solid #f7f7f7; background: #d8e6f3; font-size: 11px; line-height: 22px; color: #333; }
.menu { display: flex; gap: 13px; height: 20px; line-height: 21px; margin-left: -4px; }
.menu a { color: inherit; text-decoration: none; }
.app .bar { height: 28px; padding-bottom: 2px; border-top: 1px solid #e8e8e8; }

.forces { width: 100%; border-collapse: separate; border-spacing: 0; table-layout: fixed; }
.forces .k1 { width: 50px; }
.forces .k2 { width: 60px; }
.forces .k3 { width: 80px; }
.forces .k4 { width: 45px; }
.forces .kv { width: 85px; }
.forces th, .forces td { height: 16px; padding: 0 0 0 3px; border-right: 1px solid #dcdcdc; border-bottom: 1px solid #e2e2e2; font-weight: 400; white-space: nowrap; text-align: left; }
.forces thead th { background: #efefef; text-align: center; padding: 0; border-color: #dcdcdc; }
.forces thead th[colspan] { border-bottom: 0; }
.forces .strip td { height: 11px; background: #c6c6c6; border-color: #eee; }
.forces .strip td:first-child { background: #e0e0e0; }
.forces tbody td { background-color: #fff8d2; }
.forces .alt td { background-color: #fffbda; }
.forces .green td { background-color: #ebf2dd; }
.forces th.rowhead { background: #e0e0e0; text-align: center; padding: 0 10px 0 0; border-bottom-color: #e0e0e0; }
.forces td.c { text-align: center; padding: 0; }
.forces td.loc { text-align: right; padding-right: 5px; }
.loc svg { display: inline-block; width: 7px; height: 7px; margin-left: 2px; stroke: #888; }
.loc path + path { fill: #888; stroke: none; }
sub { font-size: 9px; line-height: 0; vertical-align: -1px; }
.forces td.v {
  --w: 0px; --s: var(--x); --tint: #ffbcbc; --line: #bdbdbd;
  text-align: right; padding-right: 16px;
  background-image: linear-gradient(var(--line), var(--line)), linear-gradient(var(--tint), var(--tint));
  background-size: 1px 12px, var(--w) 12px;
  background-position: var(--x) 1px, var(--s) 1px;
  background-repeat: no-repeat;
}
.forces .n { --x: 42px; }
.forces .vy { --x: 34px; }
.forces .vz { --x: 29px; }
.forces .mt { --x: 35px; }
.forces .my { --x: 35px; }
.forces .mz { --x: 41px; }
.forces td.vz, .forces td.left { --s: calc(var(--x) - var(--w)); --tint: #d3e0f6; }
.forces .sel td, .forces .sel th.rowhead { background-color: #0078d7; color: #fff; border-bottom-color: #0078d7; }
.forces .sel td.v { --tint: #b07f86; }
.forces .sel td.vz { --tint: #3a3af0; }
.forces .sel .focus { outline: 1px dotted #b98; outline-offset: -2px; }

/* annotation arrows */
.pointer { position: absolute; fill: none; stroke: #000; stroke-width: 4; }
.to-row { left: 100%; top: 576px; width: 106px; height: 44px; }
.to-tip { left: 221px; top: 50px; width: 84px; height: 42px; }
.to-max { left: 633px; top: 270px; width: 98px; height: 40px; }

/* detail window */
.detail { position: relative; flex: 1; display: flex; flex-direction: column; padding-top: 17px; background: #f7f7f7; overflow: hidden; }
.detail .bar { height: 29px; padding-bottom: 2px; border-top: 1px solid #eaeaea; }
.workspace { flex: 1; display: flex; border-top: 8px solid #cfcfd5; }
.side { flex: none; width: 17px; display: flex; flex-direction: column; padding-right: 8px; }
.blank { height: 19px; background: #fff; }
.blank.tall { height: 79px; }
.rule { height: 8px; background: #cfcfd5; }
.rest { flex: 1; margin-top: 17px; border-left: 1px solid #777; background: #efefef; }
.diagram { flex: 1; min-width: 0; display: flex; flex-direction: column; }
.ruler { width: 100%; height: 51px; background: #efefef; fill: #333; overflow: hidden; }
.minor, .mid, .major { fill: none; stroke: #444; }
.minor { stroke-width: 4; stroke-dasharray: 1 7; stroke-dashoffset: 1; }
.mid { stroke-width: 8; stroke-dasharray: 1 39; }
.major { stroke-width: 11; stroke-dasharray: 1 79; }
.heading { margin: 0; height: 19px; padding-left: 3px; background: #dbdbdb; font-size: 10px; line-height: 20px; font-weight: 400; }
.chart { flex: 1; width: 100%; min-height: 265px; background: #fff; overflow: hidden; font: 14px "Liberation Sans", Arial, sans-serif; }
.drops { fill: none; stroke: #999; stroke-dasharray: 2 1; }
.values { fill: #858585; stroke: #858585; stroke-width: .3; }
.values .max { fill: #d4000c; stroke: none; font-weight: 700; }
.min { fill: #0b78b8; font-weight: 700; }
.probe { fill: #666; font-weight: 700; }
.tip { position: absolute; left: 309px; right: -4px; top: 41px; padding: 3px 3px 1px; background: #f9f9f9; border: 1px solid #ddd; border-bottom: 2px solid #888; }
.tip p { margin: 0; line-height: 14px; }
.tip .lead { margin-bottom: 6px; }
```
